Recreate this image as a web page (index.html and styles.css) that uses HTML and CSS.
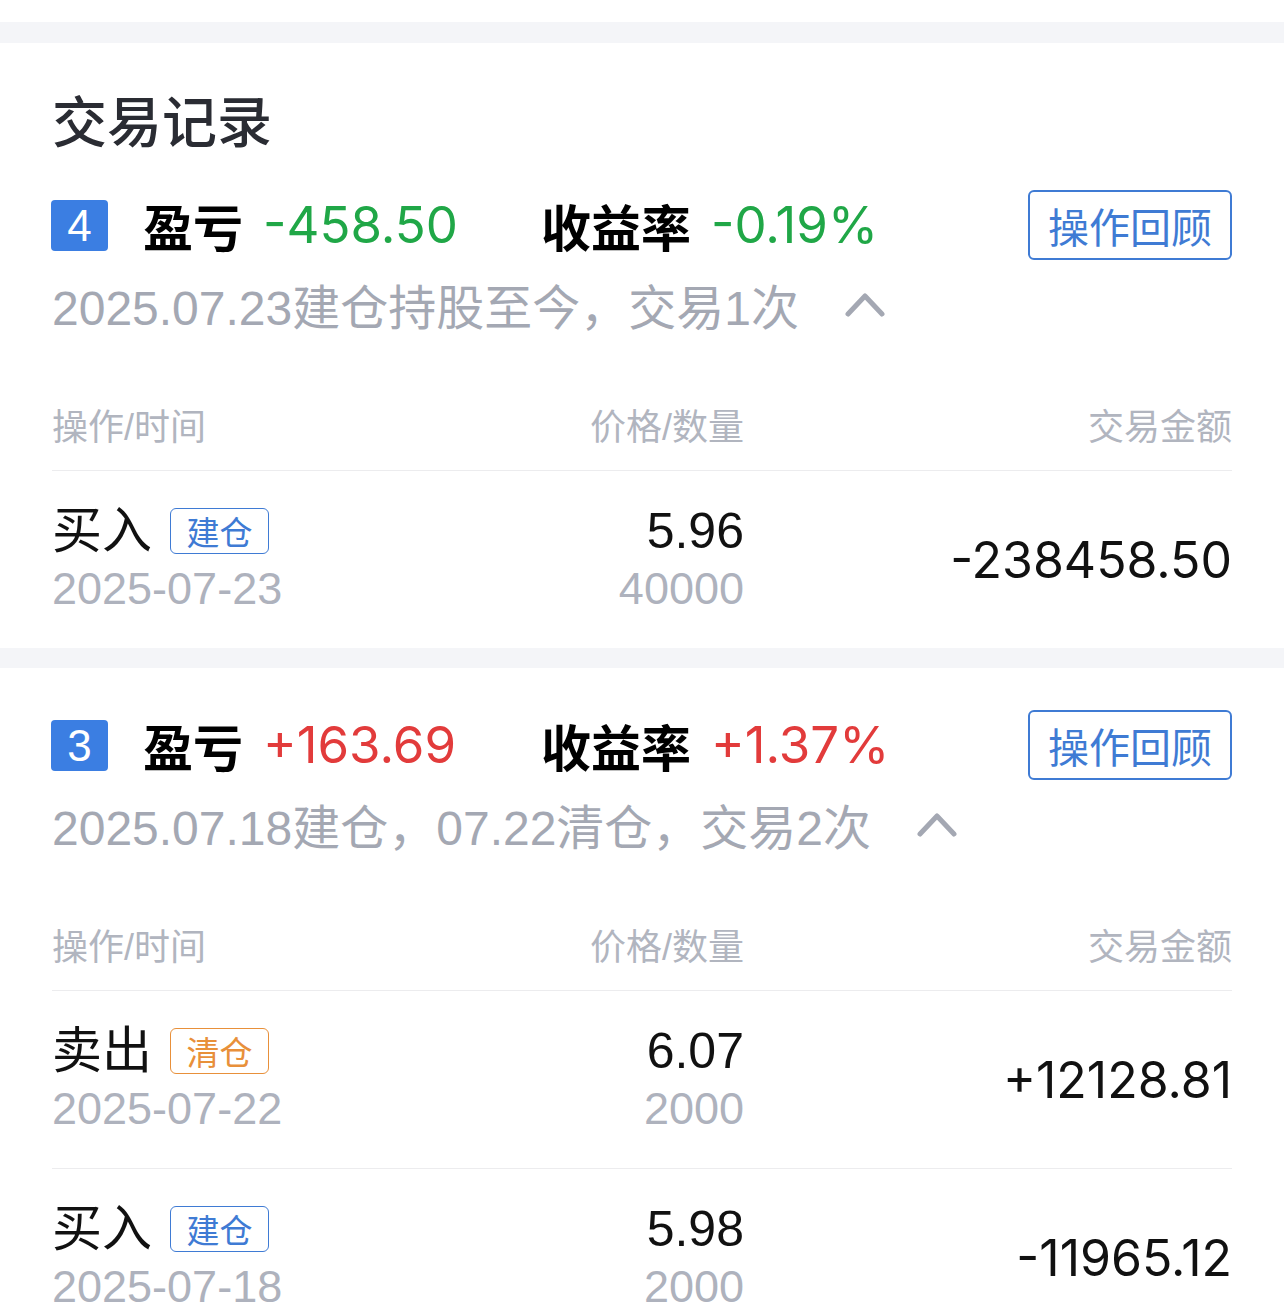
FILE: index.html
```html
<!DOCTYPE html>
<html lang="zh-CN">
	<head>
		<meta charset="UTF-8" />
		<meta name="viewport" content="width=device-width, initial-scale=1.0" />
		<title>交易记录</title>
		<link rel="stylesheet" href="styles.css">
	</head>
	<body>
		<div class="top-strip"></div>

		<section class="card card-first">
			<h2 class="title">交易记录</h2>

			<div class="summary">
				<span class="badge">4</span>
				<span class="label">盈亏</span>
				<span class="value pnl down">-458.50</span>
				<span class="label label-rate">收益率</span>
				<span class="value down">-0.19%</span>
				<button class="review">操作回顾</button>
			</div>
			<div class="sub">
				<span>2025.07.23建仓持股至今，交易1次</span>
				<svg class="chevron" viewBox="0 0 40 26" width="40" height="26"><path d="M3 23 L20 5 L37 23" /></svg>
			</div>

			<div class="thead">
				<span>操作/时间</span>
				<span class="col-mid">价格/数量</span>
				<span class="col-right">交易金额</span>
			</div>
			<div class="trade">
				<div class="op">
					<div class="op-line">买入<span class="tag tag-open">建仓</span></div>
					<div class="muted">2025-07-23</div>
				</div>
				<div class="col-mid">
					<div class="price">5.96</div>
					<div class="muted">40000</div>
				</div>
				<div class="col-right amount">-238458.50</div>
			</div>
		</section>

		<section class="card">
			<div class="summary">
				<span class="badge">3</span>
				<span class="label">盈亏</span>
				<span class="value pnl up">+163.69</span>
				<span class="label label-rate">收益率</span>
				<span class="value up">+1.37%</span>
				<button class="review">操作回顾</button>
			</div>
			<div class="sub">
				<span>2025.07.18建仓，07.22清仓，交易2次</span>
				<svg class="chevron" viewBox="0 0 40 26" width="40" height="26"><path d="M3 23 L20 5 L37 23" /></svg>
			</div>

			<div class="thead">
				<span>操作/时间</span>
				<span class="col-mid">价格/数量</span>
				<span class="col-right">交易金额</span>
			</div>
			<div class="trade">
				<div class="op">
					<div class="op-line">卖出<span class="tag tag-close">清仓</span></div>
					<div class="muted">2025-07-22</div>
				</div>
				<div class="col-mid">
					<div class="price">6.07</div>
					<div class="muted">2000</div>
				</div>
				<div class="col-right amount">+12128.81</div>
			</div>
			<div class="trade">
				<div class="op">
					<div class="op-line">买入<span class="tag tag-open">建仓</span></div>
					<div class="muted">2025-07-18</div>
				</div>
				<div class="col-mid">
					<div class="price">5.98</div>
					<div class="muted">2000</div>
				</div>
				<div class="col-right amount">-11965.12</div>
			</div>
		</section>
	</body>
</html>
```

FILE: styles.css
```css
body {
	margin: 0;
	background: #f4f5f8;
	font-family: 'Liberation Sans', 'Noto Sans CJK SC', sans-serif;
	color: #111;
}

.top-strip {
	height: 22px;
	background: #fff;
	margin-bottom: 21px;
}

.card {
	background: #fff;
	padding: 42px 52px 0 52px;
	margin-bottom: 20px;
}
.card-first {
	padding-top: 0;
}

.title {
	margin: 0;
	padding-top: 52px;
	height: 56px;
	font-size: 55px;
	line-height: 56px;
	font-weight: 500;
	color: #2a2c33;
	margin-bottom: 39px;
}

.summary {
	display: flex;
	align-items: center;
	height: 70px;
}
.badge {
	width: 57px;
	height: 51px;
	border-radius: 4px;
	background: #3b7ee2;
	color: #fff;
	font-size: 44px;
	line-height: 51px;
	text-align: center;
	margin-right: 35px;
	margin-left: -1px;
}
.label {
	font-family: 'Noto Sans CJK SC', sans-serif;
	font-size: 50px;
	font-weight: 700;
	color: #000;
	margin-right: 20px;
}
.label-rate {
	margin-left: 88px;
}
.value {
	font-family: Inter, 'Liberation Sans', sans-serif;
	font-size: 51px;
	line-height: 70px;
	white-space: nowrap;
}
.pnl {
	width: 190px;
}
.down {
	color: #20a747;
}
.up {
	color: #e23b3b;
}
.review {
	margin-left: auto;
	width: 204px;
	height: 70px;
	border: 2px solid #3f7bd4;
	border-radius: 6px;
	background: #fff;
	color: #3f7bd4;
	font-family: 'Noto Sans CJK SC', sans-serif;
	font-size: 41px;
	padding: 0;
}

.sub {
	display: flex;
	align-items: center;
	height: 60px;
	margin-top: 14px;
	font-size: 48px;
	color: #a4a8b3;
}
.chevron {
	margin-left: 46px;
	fill: none;
	stroke: #a4a8b3;
	stroke-width: 5;
	stroke-linecap: round;
	stroke-linejoin: round;
}

.thead,
.trade {
	display: grid;
	grid-template-columns: 1fr 260px 488px;
	align-items: center;
}
.thead {
	margin-top: 44px;
	height: 92px;
	border-bottom: 1px solid #ececee;
	font-size: 36px;
	color: #b1b5bf;
}
.col-mid {
	text-align: right;
}
.col-right {
	text-align: right;
}

.trade {
	height: 177px;
}
.trade + .trade {
	border-top: 1px solid #ececee;
}
.op-line {
	display: flex;
	align-items: center;
	height: 58px;
	line-height: 58px;
	font-size: 50px;
}
.tag {
	margin-left: 18px;
	width: 97px;
	height: 44px;
	border: 1px solid;
	border-radius: 6px;
	font-family: 'Noto Sans CJK SC', sans-serif;
	font-size: 33px;
	line-height: 44px;
	text-align: center;
}
.tag-open {
	color: #3f7bd4;
	border-color: #3f7bd4;
}
.tag-close {
	color: #e8903a;
	border-color: #e8903a;
}
.muted {
	height: 58px;
	line-height: 58px;
	font-size: 45px;
	color: #aeb2bd;
}
.price {
	height: 58px;
	line-height: 58px;
	font-size: 50px;
}
.amount {
	font-family: Inter, 'Liberation Sans', sans-serif;
	font-size: 50px;
}
```
